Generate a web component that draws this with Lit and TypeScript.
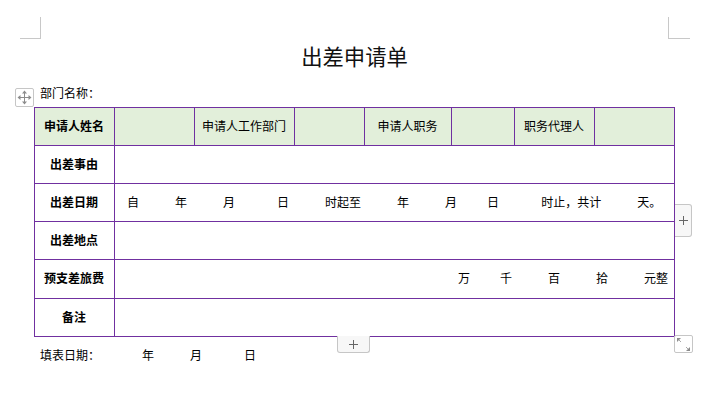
import { LitElement, html, css, svg } from "lit";
import { customElement } from "lit/decorators.js";

type Item = { text: string; gap: number };

const DATE_ITEMS: Item[] = [
  { text: "自", gap: 0 },
  { text: "年", gap: 36 },
  { text: "月", gap: 36 },
  { text: "日", gap: 42 },
  { text: "时起至", gap: 36 },
  { text: "年", gap: 36 },
  { text: "月", gap: 36 },
  { text: "日", gap: 30 },
  { text: "时止，共计", gap: 42 },
  { text: "天。", gap: 36 },
];
const MONEY_ITEMS: Item[] = [
  { text: "万", gap: 0 },
  { text: "千", gap: 30 },
  { text: "百", gap: 36 },
  { text: "拾", gap: 36 },
  { text: "元整", gap: 36 },
];
const FOOT_ITEMS: Item[] = [
  { text: "填表日期：", gap: 0 },
  { text: "年", gap: 42 },
  { text: "月", gap: 36 },
  { text: "日", gap: 42 },
];

const spaced = (items: Item[]) =>
  items.map((i) => html`<span style="margin-left:${i.gap}px">${i.text}</span>`);

const rows: [string, Item[] | null, string][] = [
  ["出差事由", null, ""],
  ["出差日期", DATE_ITEMS, "start"],
  ["出差地点", null, ""],
  ["预支差旅费", MONEY_ITEMS, "end tall"],
  ["备注", null, ""],
];

@customElement("app-root")
export class AppRoot extends LitElement {
  static styles = css`
    :host {
      display: block;
      position: relative;
      width: 711px;
      height: 406px;
      overflow: hidden;
      background: #fff;
      color: #000;
      font: 12px/16px "Noto Sans CJK SC", "Liberation Sans", sans-serif;
    }
    .page {
      display: flex;
      flex-direction: column;
      padding: 42px 0 0 34px;
    }
    h1 {
      margin: 0 2px 0 -34px;
      font-size: 21.33px;
      line-height: 28px;
      font-weight: 400;
      text-align: center;
      color: #111;
    }
    .line {
      display: flex;
      padding-left: 6px;
      height: 16px;
    }
    .dept {
      margin-top: 15px;
      height: 22px;
    }
    .foot {
      margin-top: 10px;
    }
    .sheet {
      display: grid;
      grid-template-columns: 80px 80px 100px 70px 87px 63px 80px 80px;
      width: 641px;
      box-sizing: border-box;
      border-left: 1px solid #7030a0;
      border-top: 1px solid #7030a0;
    }
    .cell {
      display: flex;
      align-items: center;
      justify-content: center;
      height: 38px;
      box-sizing: border-box;
      padding: 0 1px 2px 0;
      border-right: 1px solid #7030a0;
      border-bottom: 1px solid #7030a0;
    }
    .head {
      background: #e2efda;
    }
    .bold {
      font-weight: 700;
    }
    .wide {
      grid-column: span 7;
    }
    .start {
      justify-content: flex-start;
      padding-left: 12px;
    }
    .end {
      justify-content: flex-end;
      padding-right: 6px;
    }
    .tall {
      height: 39px;
    }
    .crop {
      position: absolute;
      top: 17px;
      width: 20px;
      height: 21px;
      border-bottom: 1px solid #c8c8c8;
    }
    .crop.l {
      left: 20px;
      border-right: 1px solid #c8c8c8;
    }
    .crop.r {
      left: 668px;
      border-left: 1px solid #c8c8c8;
      width: 21px;
    }
    .handle {
      position: absolute;
      box-sizing: border-box;
      display: flex;
      align-items: center;
      justify-content: center;
      border: 1px solid #c6c6c6;
      background: #fff;
      border-radius: 2px;
    }
    .handle svg {
      display: block;
    }
    .move {
      left: 15px;
      top: 88px;
      width: 19px;
      height: 19px;
    }
    .add-col {
      left: 675px;
      top: 204px;
      width: 17px;
      height: 33px;
      background: #f7f7f7;
      border-left: 0;
      border-radius: 0 3px 3px 0;
    }
    .add-row {
      left: 337px;
      top: 336px;
      width: 33px;
      height: 17px;
      background: #f7f7f7;
      border-top: 0;
      border-radius: 0 0 3px 3px;
    }
    .resize {
      left: 674px;
      top: 335px;
      width: 19px;
      height: 18px;
    }
  `;

  private plus() {
    return html`<svg width="11" height="11" viewBox="0 0 11 11">
      <path d="M5.5 1v9M1 5.5h9" stroke="#666" fill="none" />
    </svg>`;
  }

  render() {
    const arrow = svg`<path d="M7.5 0.5l-2.5 3h5zM7.5 14.5l-2.5-3h5zM0.5 7.5l3-2.5v5zM14.5 7.5l-3-2.5v5z" fill="#8c8c8c"/>`;
    return html`
      <div class="page">
        <h1>出差申请单</h1>
        <div class="line dept">部门名称：</div>
        <div class="sheet">
          <div class="cell head bold">申请人姓名</div>
          <div class="cell head"></div>
          <div class="cell head">申请人工作部门</div>
          <div class="cell head"></div>
          <div class="cell head">申请人职务</div>
          <div class="cell head"></div>
          <div class="cell head">职务代理人</div>
          <div class="cell head"></div>
          ${rows.map(
            ([label, items, cls]) => html`
              <div class="cell bold ${cls.includes("tall") ? "tall" : ""}">${label}</div>
              <div class="cell wide ${cls}">${items ? spaced(items) : ""}</div>
            `
          )}
        </div>
        <div class="line foot">${spaced(FOOT_ITEMS)}</div>
      </div>
      <div class="crop l"></div>
      <div class="crop r"></div>
      <div class="handle move">
        <svg width="15" height="15" viewBox="0 0 15 15">
          <path d="M7.5 3v9M3 7.5h9" stroke="#8c8c8c" fill="none" />
          ${arrow}
        </svg>
      </div>
      <div class="handle add-col">${this.plus()}</div>
      <div class="handle add-row">${this.plus()}</div>
      <div class="handle resize">
        <svg width="17" height="16" viewBox="0 0 17 16">
          <path d="M2 2h4L2 6zM15 15h-4l4-4z" fill="#8c8c8c" />
          <path d="M4 4l2 2M13 13l-2-2" stroke="#a8a8a8" fill="none" />
        </svg>
      </div>
    `;
  }
}
